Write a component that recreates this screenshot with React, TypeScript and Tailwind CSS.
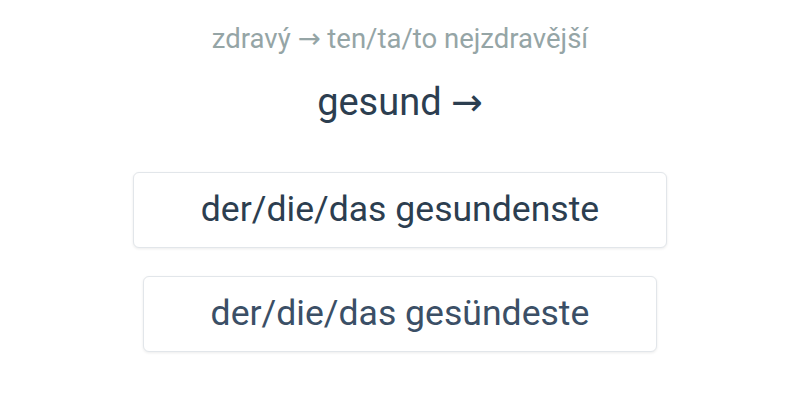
export default function App() {
  const options = [
    { text: 'der/die/das gesundenste', color: 'text-[#2c3e50]' },
    { text: 'der/die/das gesündeste', color: 'text-[#3b4f66]' },
  ]

  return (
    <div className="w-[800px] h-[400px] bg-white flex flex-col items-center font-['Roboto','DejaVu_Sans',sans-serif]">
      {/* Prompt */}
      <div className="mt-[21px] text-[27.5px] leading-[36px] text-[#95a5a6]">
        zdravý → ten/ta/to nejzdravější
      </div>
      <div className="mt-[23px] text-[38px] leading-[44px] text-[#2c3e50]">gesund →</div>

      {/* Answers */}
      <div className="mt-[48px] flex flex-col items-center gap-[28px]">
        {options.map((o) => (
          <button
            key={o.text}
            className={`h-[76px] px-[67px] bg-white border border-[#e2e6ea] rounded-[6px] shadow-[0_1px_3px_rgba(0,0,0,0.08)] text-[35.6px] ${o.color}`}
          >
            {o.text}
          </button>
        ))}
      </div>
    </div>
  )
}
